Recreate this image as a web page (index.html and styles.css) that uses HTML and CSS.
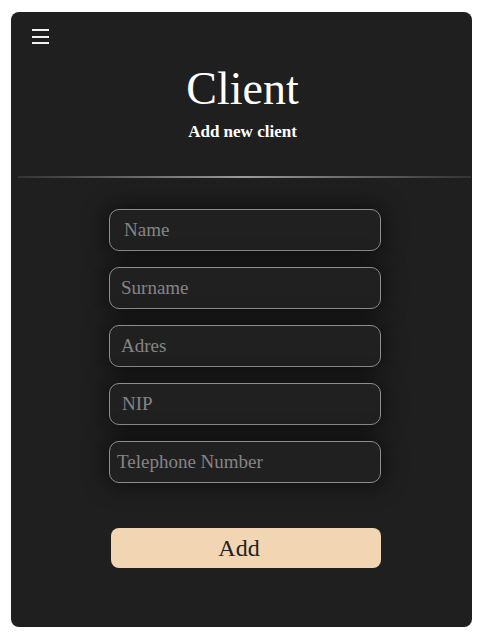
FILE: index.html
```html
<!DOCTYPE html>
<html lang="en">
<head>
    <meta charset="UTF-8">
    <meta name="viewport" content="width=device-width, initial-scale=1.0">
    <title>Client</title>
    <link rel="stylesheet" href="styles.css">
</head>
<body>
    <div class="card">
        <button class="menu-toggle" aria-label="Menu">
            <span></span>
            <span></span>
            <span></span>
        </button>

        <header class="page-header">
            <h1>Client</h1>
            <h2>Add new client</h2>
        </header>

        <hr class="divider">

        <form class="client-form">
            <input type="text" class="field field-name" placeholder="Name">
            <input type="text" class="field" placeholder="Surname">
            <input type="text" class="field" placeholder="Adres">
            <input type="text" class="field field-nip" placeholder="NIP">
            <input type="text" class="field field-phone" placeholder="Telephone Number">
            <button type="submit" class="add-btn">Add</button>
        </form>
    </div>
</body>
</html>
```

FILE: styles.css
```css
body {
    margin: 0;
    padding: 12px 8px 0 11px;
    background: #ffffff;
    font-family: 'Liberation Serif', 'Times New Roman', serif;
}

.card {
    height: 615px;
    box-sizing: border-box;
    background: #1f1f1f;
    border-radius: 8px;
    padding-top: 17px;
    overflow: hidden;
}

.menu-toggle {
    display: flex;
    flex-direction: column;
    gap: 4.5px;
    width: 17px;
    margin-left: 21px;
    padding: 0;
    background: none;
    border: none;
    cursor: pointer;
}

.menu-toggle span {
    display: block;
    height: 2px;
    background: #f2f2f2;
}

.page-header {
    text-align: center;
    color: #ffffff;
    margin-top: 22px;
    padding-left: 2px;
}

.page-header h1 {
    margin: 0;
    font-size: 46px;
    font-weight: normal;
    line-height: 46px;
}

.page-header h2 {
    margin: 11px 0 0;
    font-size: 17px;
    font-weight: bold;
    line-height: 17px;
}

.divider {
    height: 2px;
    margin: 36px 1px 0 7px;
    border: none;
    background: linear-gradient(to right, rgba(110, 110, 110, 0.25), #9a9a9a 50%, rgba(110, 110, 110, 0.25));
}

.client-form {
    display: flex;
    flex-direction: column;
    gap: 16px;
    width: 272px;
    margin: 31px 0 0 98px;
}

.field {
    box-sizing: border-box;
    height: 42px;
    padding: 0 11px;
    background: #202020;
    border: 1px solid #8e8e8e;
    border-radius: 10px;
    color: #dddddd;
    font-family: inherit;
    font-size: 19px;
    box-shadow: 0 0 24px rgba(0, 0, 0, 0.75);
    outline: none;
}

.field::placeholder {
    color: #858585;
}

.field-name {
    padding-left: 14px;
}

.field-nip {
    padding-left: 12px;
}

.field-phone {
    padding-left: 7px;
}

.add-btn {
    height: 40px;
    width: 270px;
    margin: 29px 0 0 2px;
    padding: 0 14px 0 0;
    background: #f2d6b3;
    border: none;
    border-radius: 8px;
    color: #222222;
    font-family: inherit;
    font-size: 24px;
    cursor: pointer;
}
```
